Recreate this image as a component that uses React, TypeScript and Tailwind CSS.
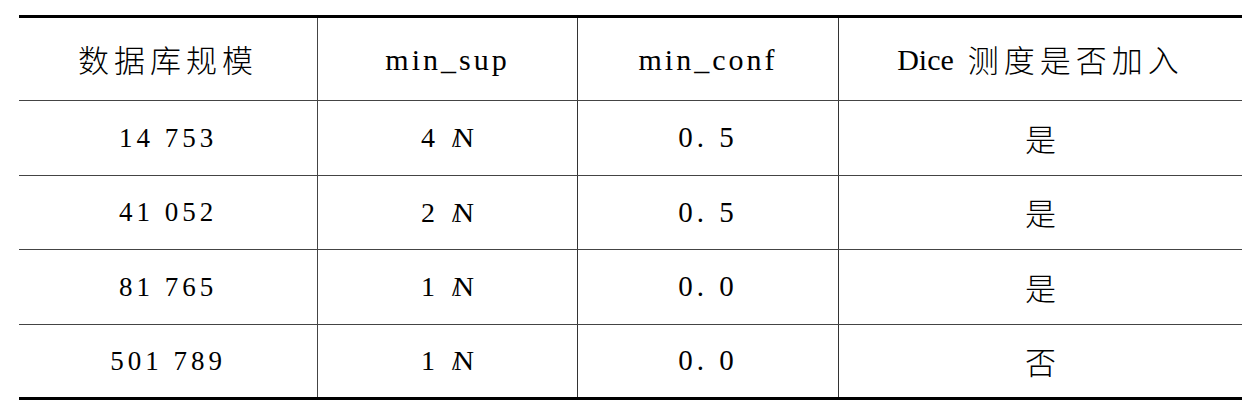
const rows = [
  { size: "14 753", sup: "4", conf: "0. 5", dice: "是", h: "h-[75px]" },
  { size: "41 052", sup: "2", conf: "0. 5", dice: "是", h: "h-[74px]" },
  { size: "81 765", sup: "1", conf: "0. 0", dice: "是", h: "h-[75px]" },
  { size: "501 789", sup: "1", conf: "0. 0", dice: "否", h: "h-[72px]" },
];

const cell = "flex items-center justify-center";

function Fraction({ n }: { n: string }) {
  return (
    <span className="text-[28px] text-black">
      {n}
      <span className="ml-[17px] tracking-[-6px]">/</span>N
    </span>
  );
}

export default function App() {
  return (
    <div className="w-[1252px] h-[415px] bg-white pt-[15px] pl-[19px] font-['Liberation_Serif','Noto_Sans_CJK_SC',serif] text-black">
      <div className="w-[1223px] border-t-[3px] border-b-[3px] border-black">
        <div className="grid grid-cols-[299px_260px_261px_403px] h-[83px] border-b border-[#444]">
          <div className={`${cell} border-r border-[#444]`}>
            <span className="text-[31px] tracking-[5px] font-['Noto_Sans_CJK_SC',sans-serif] font-light">数据库规模</span>
          </div>
          <div className={`${cell} border-r border-[#333]`}>
            <span className="text-[30px] tracking-[3px]">min_sup</span>
          </div>
          <div className={`${cell} border-r border-[#333]`}>
            <span className="text-[30px] tracking-[3px]">min_conf</span>
          </div>
          <div className={cell}>
            <span className="text-[30px] mr-[14px]">Dice</span>
            <span className="text-[31px] tracking-[5px] font-['Noto_Sans_CJK_SC',sans-serif] font-light">测度是否加入</span>
          </div>
        </div>
        {rows.map((r, i) => (
          <div
            key={i}
            className={`grid grid-cols-[299px_260px_261px_403px] ${r.h} ${i < rows.length - 1 ? "border-b border-[#444]" : ""}`}
          >
            <div className={`${cell} border-r border-[#444]`}>
              <span className="text-[27px] tracking-[4px]">{r.size}</span>
            </div>
            <div className={`${cell} border-r border-[#333]`}>
              <Fraction n={r.sup} />
            </div>
            <div className={`${cell} border-r border-[#333]`}>
              <span className="text-[29px] tracking-[4px]">{r.conf}</span>
            </div>
            <div className={cell}>
              <span className="text-[31px] font-['Noto_Sans_CJK_SC',sans-serif] font-light">{r.dice}</span>
            </div>
          </div>
        ))}
      </div>
    </div>
  );
}
